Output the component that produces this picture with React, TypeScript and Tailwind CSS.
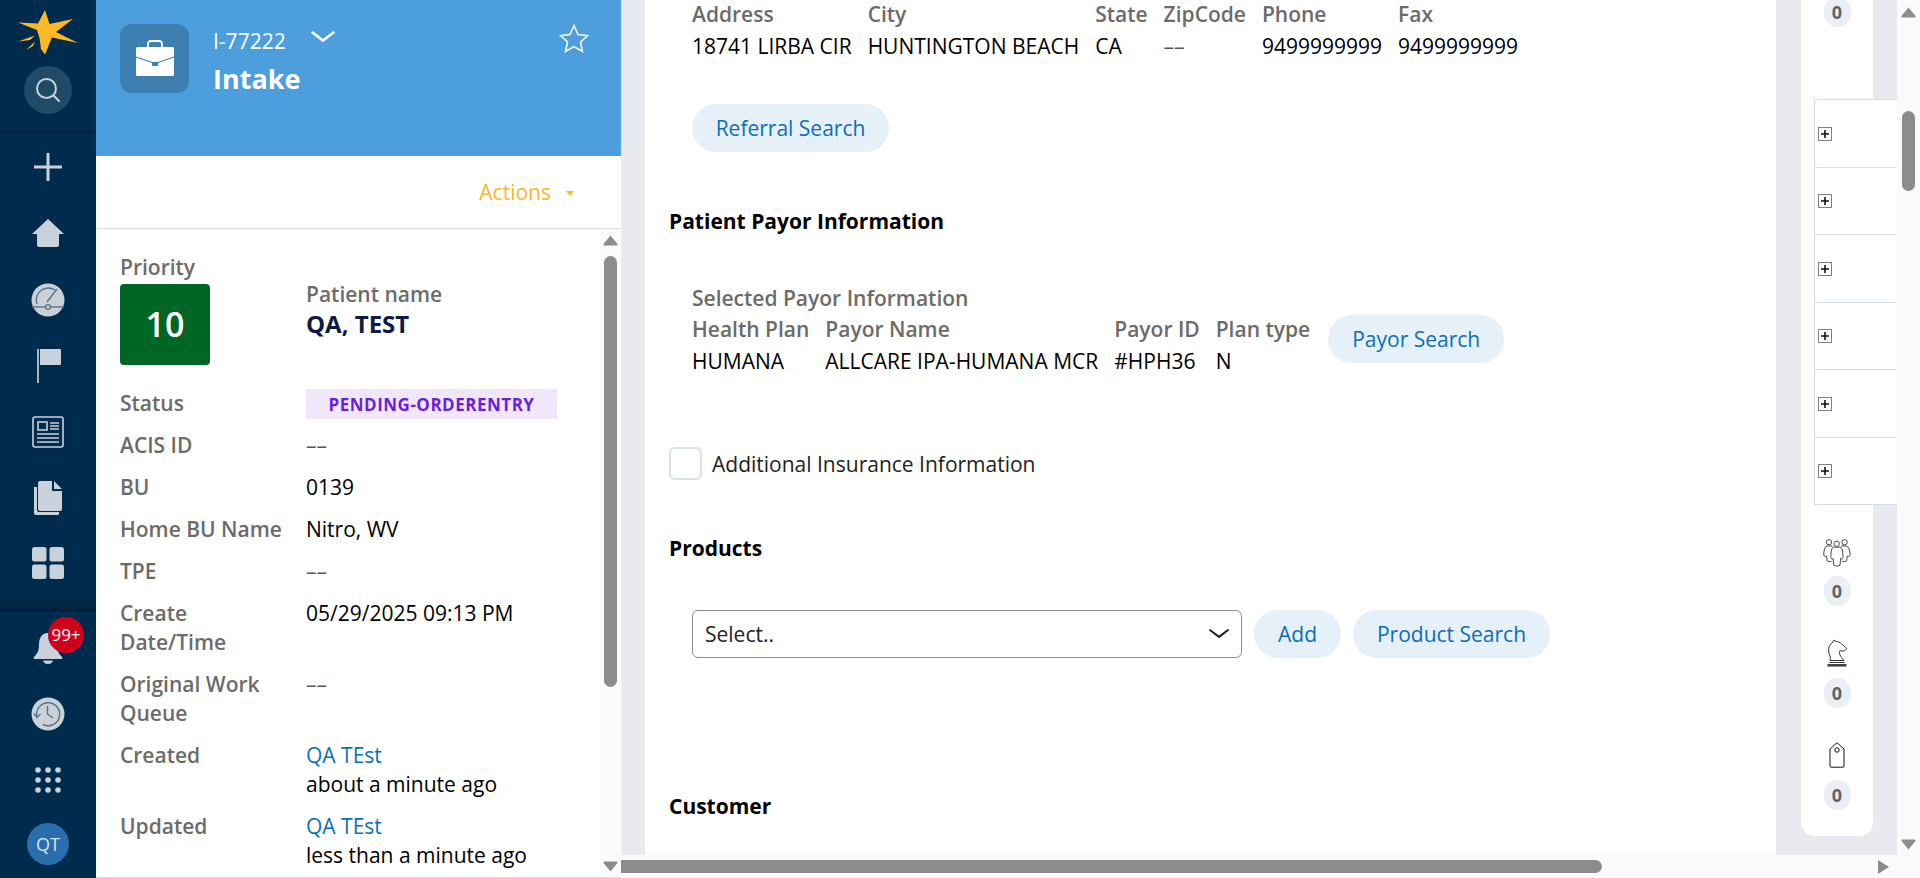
import React from 'react'

const NAVY = '#c9d1da'

const Logo = () => (
  <svg width="64" height="50" viewBox="16 9 64 50">
    <path
      d="M45 11 L49.5 25 L73 20 L56 33 L78 44 L52 38.5 L45 55.5 L41 50 L39.5 39 L37 31 L18 23.5 L38 24.5 Z"
      fill="#fdb827"
    />
    <path d="M18 42.5 L35 36.5 L30 41 Z M26 51 L35 42.5 L33 47 Z" fill="#fdb827" />
  </svg>
)

const SearchIcon = () => (
  <svg width="26" height="26" viewBox="0 0 26 26" fill="none" stroke={NAVY} strokeWidth="2">
    <circle cx="11.5" cy="11.5" r="9.5" />
    <path d="M18.5 18.5 L24 24" strokeLinecap="round" />
  </svg>
)

const PlusIcon = () => (
  <svg width="30" height="30" viewBox="0 0 30 30" stroke={NAVY} strokeWidth="3">
    <path d="M15 1 V29 M1 15 H29" />
  </svg>
)

const HomeIcon = () => (
  <svg width="34" height="30" viewBox="0 0 34 30" fill={NAVY}>
    <path d="M17 1 L33 16 L28 16 L28 27 Q28 29 26 29 L8 29 Q6 29 6 27 L6 16 L1 16 Z" />
  </svg>
)

const GaugeIcon = () => (
  <svg width="34" height="34" viewBox="0 0 34 34">
    <circle cx="17" cy="17" r="16.5" fill={NAVY} />
    <path d="M6 21 A12 12 0 0 1 24 7" fill="none" stroke="#5d6f82" strokeWidth="1.4" />
    <path d="M16 19 L26 6" stroke="#5d6f82" strokeWidth="1.4" />
    <path d="M1 24 H33" stroke="#5d6f82" strokeWidth="1.4" />
    <circle cx="17" cy="24" r="2.4" fill={NAVY} stroke="#5d6f82" strokeWidth="1.2" />
  </svg>
)

const FlagIcon = () => (
  <svg width="26" height="34" viewBox="0 0 26 34">
    <rect x="1" y="0" width="2" height="34" fill="#a8b4c0" />
    <path d="M4 0 H24 Q25 0 25 1 V15 Q25 16 24 16 H4 Z" fill={NAVY} />
  </svg>
)

const NewsIcon = () => (
  <svg width="32" height="32" viewBox="0 0 32 32" fill="none" stroke={NAVY}>
    <rect x="1" y="1" width="30" height="30" rx="2" strokeWidth="1.6" />
    <rect x="6" y="6" width="9" height="8" strokeWidth="1.6" />
    <path d="M18 7 H27 M18 10 H27 M18 13 H27 M5 18 H27 M5 22 H27 M5 26 H27" strokeWidth="1.6" />
  </svg>
)

const DocsIcon = () => (
  <svg width="30" height="34" viewBox="0 0 30 34" fill={NAVY}>
    <path d="M1 6 H4 V29 Q4 31 6 31 H26 V33 Q26 34 25 34 H3 Q1 34 1 32 Z" />
    <path d="M5 2 Q5 0 7 0 H19 V10 H29 V28 Q29 30 27 30 H7 Q5 30 5 28 Z" />
    <path d="M21 0 L29 8 H21 Z" />
  </svg>
)

const GridIcon = () => (
  <svg width="32" height="32" viewBox="0 0 32 32" fill={NAVY}>
    <rect x="0" y="0" width="14.5" height="14.5" rx="2.5" />
    <rect x="17.5" y="0" width="14.5" height="14.5" rx="2.5" />
    <rect x="0" y="17.5" width="14.5" height="14.5" rx="2.5" />
    <rect x="17.5" y="17.5" width="14.5" height="14.5" rx="2.5" />
  </svg>
)

const BellIcon = () => (
  <svg width="30" height="32" viewBox="0 0 30 32" fill={NAVY}>
    <path d="M15 1 C8 1 6 7 6 13 C6 19 4 22 1 25 Q0 27 2 27 H28 Q30 27 29 25 C26 22 24 19 24 13 C24 7 22 1 15 1 Z" />
    <path d="M10 28.5 H20 Q19 32 15 32 Q11 32 10 28.5 Z" />
  </svg>
)

const HistoryIcon = () => (
  <svg width="34" height="34" viewBox="0 0 34 34" fill="none">
    <circle cx="17" cy="17" r="16.5" fill={NAVY} />
    <path d="M6 20 A11.5 11.5 0 1 1 12 27.5" stroke="#5d6f82" strokeWidth="1.4" />
    <path d="M3 16.5 L6 20.5 L9.5 17" stroke="#5d6f82" strokeWidth="1.4" />
    <path d="M16.5 9 V17 L22 21" stroke="#5d6f82" strokeWidth="1.4" />
  </svg>
)

const DotsIcon = () => (
  <svg width="26" height="26" viewBox="0 0 26 26" fill={NAVY}>
    {[3, 13, 23].map(y =>
      [3, 13, 23].map(x => <circle key={`${x}-${y}`} cx={x} cy={y} r="2.8" />)
    )}
  </svg>
)

const Briefcase = () => (
  <svg width="40" height="37" viewBox="0 0 40 37">
    <path d="M13 8 V4 Q13 1 16 1 H24 Q27 1 27 4 V8" fill="none" stroke="#fff" strokeWidth="1.8" />
    <rect x="1" y="7" width="38" height="29" rx="1.5" fill="#fff" />
    <path d="M1 17 L17 22.5 H23 L39 17" fill="none" stroke="#3e7fb1" strokeWidth="1.2" />
    <path d="M17 22.5 H23 V25 Q23 26 22 26 H18 Q17 26 17 25 Z" fill="#3e7fb1" />
  </svg>
)

const StarOutline = () => (
  <svg width="30" height="29" viewBox="0 0 30 29" fill="none" stroke="#fff" strokeWidth="1.5">
    <path d="M15 1.5 L19 10.5 L28.5 11.5 L21.5 18 L23.5 27.5 L15 22.5 L6.5 27.5 L8.5 18 L1.5 11.5 L11 10.5 Z" />
  </svg>
)

const Chevron = ({ className = '' }: { className?: string }) => (
  <svg width="24" height="12" viewBox="0 0 24 12" fill="none" className={className}>
    <path d="M1.5 1.5 L12 9.5 L22.5 1.5" stroke="currentColor" strokeWidth="2.6" strokeLinecap="round" />
  </svg>
)

const PeopleIcon = () => (
  <svg width="28" height="28" viewBox="0 0 28 28" fill="none" stroke="#4a4a4a" strokeWidth="1">
    <circle cx="6" cy="3.2" r="2.7" />
    <circle cx="13.7" cy="4.8" r="2.7" />
    <circle cx="21.6" cy="3.2" r="2.7" />
    <path d="M9.5 7 H4.5 Q1.7 7.5 1.2 11 L0.7 15 Q0.7 17.5 2.6 17.5 L3.6 17 L4.2 22 Q6 23 8.5 22.5" />
    <path d="M18 7 H23 Q26 7.5 26.5 11 L27.2 15 Q27.2 17.5 25.2 17.5 L24.2 17 L23.6 22 Q21.6 23 19.3 22.5" />
    <path d="M10.7 8.2 H16.8 Q19.3 8.7 19.6 12 L20 18.5 Q19.8 20 18.2 20 L17.6 19.5 L17 26.3 Q14 28 10.8 26.3 L10.2 19.5 L9.5 20 Q7.8 20 7.8 18.5 L8.2 12 Q8.6 8.7 10.7 8.2 Z" />
  </svg>
)

const KnightIcon = () => (
  <svg width="20" height="28" viewBox="0 0 20 28" fill="none" stroke="#333" strokeWidth="1">
    <path d="M3 21.5 C4.5 18 2 16 1.6 12 C1.3 8 3 5 6 3 L7 1 L9 2.5 C13 2.5 16 6 19.5 9.5 C19 11.5 16 13 13 11.5 C11 14 14 18 17 21.5 Z" />
    <path d="M2.5 23.5 H17.5" />
    <rect x="0.5" y="25" width="19" height="2.6" fill="#444" stroke="none" />
  </svg>
)

const TagIcon = () => (
  <svg width="16" height="26" viewBox="0 0 16 26" fill="none" stroke="#111" strokeWidth="1">
    <path d="M8 0.7 L15 7 V24 Q15 25.2 14 25.2 H2 Q1 25.2 1 24 V7 Z" />
    <circle cx="8" cy="8" r="2.2" />
  </svg>
)

const TreePlus = () => (
  <span className="flex h-[14px] w-[14px] items-center justify-center border border-[#808080] bg-white">
    <svg width="8" height="8" viewBox="0 0 8 8" stroke="#111" strokeWidth="1.6">
      <path d="M4 0 V8 M0 4 H8" />
    </svg>
  </span>
)

const Badge = ({ className = '' }: { className?: string }) => (
  <span className={`flex h-[30px] w-[27px] items-center justify-center rounded-full bg-[#e9eff4] text-[18px] font-bold text-[#5f6368] ${className}`}>
    0
  </span>
)

const Pill = ({ children, className = '' }: { children: React.ReactNode; className?: string }) => (
  <button className={`flex h-[48px] items-center justify-center rounded-full bg-[#e6f0f8] text-[#0b6fb8] ${className}`}>
    {children}
  </button>
)

const Sidebar = () => (
  <aside className="flex h-full w-[96px] shrink-0 flex-col items-center bg-[#002b4d]">
    <div className="flex h-[133px] w-full shrink-0 flex-col items-center border-b border-[#001e36] pt-[8px]">
      <Logo />
      <div className="mt-[8px] flex h-[48px] w-[48px] items-center justify-center rounded-full bg-[#214a68]">
        <SearchIcon />
      </div>
    </div>
    <div className="flex h-[479px] w-full shrink-0 flex-col items-center bg-gradient-to-b from-[#002b4d] from-[96%] to-[#00223d] pt-[19px]">
      <PlusIcon />
      <div className="mt-[36px]"><HomeIcon /></div>
      <div className="mt-[35px]"><GaugeIcon /></div>
      <div className="mt-[32px] pl-[2px]"><FlagIcon /></div>
      <div className="mt-[33px]"><NewsIcon /></div>
      <div className="mt-[33px]"><DocsIcon /></div>
      <div className="mt-[32px]"><GridIcon /></div>
    </div>
    <div className="flex w-full flex-col items-center pt-[20px]">
      <div className="relative h-[32px]">
        <BellIcon />
        <span className="absolute left-[15px] top-[-15px] flex h-[36px] w-[36px] items-center justify-center rounded-full bg-[#d0021b] text-[17px] text-white">
          99+
        </span>
      </div>
      <div className="mt-[33px]"><HistoryIcon /></div>
      <div className="mt-[36px]"><DotsIcon /></div>
      <div className="mt-[30px] flex h-[42px] w-[42px] items-center justify-center rounded-full bg-[#2a6ead] text-[18px] text-[#d6e4f0]">
        QT
      </div>
    </div>
  </aside>
)

const LABEL = 'font-semibold text-[#6b6b6b]'

const rows: { label: React.ReactNode; value: React.ReactNode }[] = [
  { label: 'ACIS ID', value: <span className="text-[#555]">––</span> },
  { label: 'BU', value: '0139' },
  { label: 'Home BU Name', value: 'Nitro, WV' },
  { label: 'TPE', value: <span className="text-[#555]">––</span> },
  { label: <>Create<br />Date/Time</>, value: '05/29/2025 09:13 PM' },
  { label: <>Original Work<br />Queue</>, value: <span className="text-[#555]">––</span> },
  { label: 'Created', value: <><span className="text-[#0b6fb8]">QA TEst</span><br />about a minute ago</> },
  { label: 'Updated', value: <><span className="text-[#0b6fb8]">QA TEst</span><br />less than a minute ago</> },
]

const ArrowUp = () => (
  <svg width="15" height="11" viewBox="0 0 15 11" fill="#8c8c8c">
    <path d="M7.5 0.5 L14.5 9 Q15 10.5 13.5 10.5 H1.5 Q0 10.5 0.5 9 Z" />
  </svg>
)

const ArrowDown = () => (
  <svg width="15" height="11" viewBox="0 0 15 11" fill="#8c8c8c">
    <path d="M7.5 10.5 L14.5 2 Q15 0.5 13.5 0.5 H1.5 Q0 0.5 0.5 2 Z" />
  </svg>
)

const LeftPanel = () => (
  <section className="flex h-full w-[525px] shrink-0 flex-col bg-white">
    <header className="flex h-[156px] shrink-0 items-start bg-[#4c9fdc] pl-[24px] pt-[24px] text-white">
      <div className="flex h-[69px] w-[69px] items-center justify-center rounded-[12px] bg-[#3e7fb1]">
        <Briefcase />
      </div>
      <div className="ml-[24px] mt-[3px]">
        <div className="flex items-center">
          <span className="text-[21px] leading-[28px]">I-77222</span>
          <Chevron className="ml-[25px] mt-[-8px]" />
        </div>
        <div className="mt-[6px] text-[27px] font-bold leading-[36px]">Intake</div>
      </div>
      <div className="ml-auto mr-[32px]"><StarOutline /></div>
    </header>
    <div className="flex h-[73px] shrink-0 items-center justify-end border-b border-[#d6dce8] pr-[47px] pt-[2px] text-[21px] text-[#fdb52d]">
      Actions
      <span className="ml-[15px] mt-[1px] h-0 w-0 border-x-[4.5px] border-t-[5px] border-x-transparent border-t-[#fdb52d]" />
    </div>
    <div className="flex min-h-0 flex-1 border-b border-[#d6dce8]">
      <div className="min-w-0 flex-1 pl-[24px] pt-[24px] text-[21px] leading-[29px]">
        <div className="flex">
          <div className="w-[186px] shrink-0">
            <div className={LABEL}>Priority</div>
            <div className="mt-[2px] flex h-[81px] w-[90px] items-center justify-center rounded-[4px] bg-[#006625] text-[34px] font-semibold text-white">
              10
            </div>
          </div>
          <div className="pt-[27px]">
            <div className={LABEL}>Patient name</div>
            <div className="text-[24px] font-bold text-[#0b1b45]">QA, TEST</div>
          </div>
        </div>
        <div className="mt-[24px] flex items-center">
          <div className={`mt-[-2px] w-[186px] shrink-0 ${LABEL}`}>Status</div>
          <div className="flex h-[30px] w-[251px] items-center justify-center bg-[#f0e7fa] text-[17px] font-bold tracking-[0.5px] text-[#6d1fd8]">
            PENDING-ORDERENTRY
          </div>
        </div>
        <div className="mt-[12px] flex flex-col gap-y-[13px]">
          {rows.map((row, i) => (
            <div key={i} className="flex text-black">
              <div className={`w-[186px] shrink-0 ${LABEL}`}>{row.label}</div>
              <div>{row.value}</div>
            </div>
          ))}
        </div>
      </div>
      <div className="flex w-[21px] shrink-0 flex-col items-center bg-[#fafafa] pt-[6px]">
        <ArrowUp />
        <div className="mt-[10px] h-[431px] w-[13px] rounded-full bg-[#8c8c8c]" />
        <div className="mb-[5px] mt-auto"><ArrowDown /></div>
      </div>
    </div>
  </section>
)

const addressCols = [
  ['Address', '18741 LIRBA CIR'],
  ['City', 'HUNTINGTON BEACH'],
  ['State', 'CA'],
  ['ZipCode', '––'],
  ['Phone', '9499999999'],
  ['Fax', '9499999999'],
]

const payorCols = [
  ['Health Plan', 'HUMANA'],
  ['Payor Name', 'ALLCARE IPA-HUMANA MCR'],
  ['Payor ID', '#HPH36'],
  ['Plan type', 'N'],
]

const InfoCols = ({ cols }: { cols: string[][] }) => (
  <div className="flex gap-x-4">
    {cols.map(([label, value]) => (
      <div key={label} className="flex flex-col gap-y-[3px] whitespace-nowrap">
        <span className={LABEL}>{label}</span>
        <span className={value === '––' ? 'text-[#555]' : 'text-black'}>{value}</span>
      </div>
    ))}
  </div>
)

const Content = () => (
  <div className="h-full min-w-0 flex-1 overflow-hidden bg-white pl-[24px] text-[21px] leading-[29px]">
    <div className="ml-[23px]">
      <InfoCols cols={addressCols} />
      <Pill className="mt-[43px] w-[197px]">Referral Search</Pill>
    </div>
    <h2 className="mt-[55px] font-bold text-black">Patient Payor Information</h2>
    <div className="ml-[23px] mt-[48px]">
      <div className={LABEL}>Selected Payor Information</div>
      <div className="mt-[2px] flex items-start gap-x-[18px]">
        <InfoCols cols={payorCols} />
        <Pill className="w-[176px]">Payor Search</Pill>
      </div>
    </div>
    <label className="mt-[71px] flex items-center">
      <span className="h-[33px] w-[33px] rounded-[6px] border-2 border-[#d6e0ef] bg-white" />
      <span className="ml-[10px] mt-[1px] text-[#222]">Additional Insurance Information</span>
    </label>
    <h2 className="mt-[54px] font-bold text-black">Products</h2>
    <div className="ml-[23px] mt-[47px] flex items-center gap-x-3">
      <div className="flex h-[48px] w-[550px] items-center justify-between rounded-[6px] border border-[#8c8c8c] px-[12px] text-[#222]">
        Select..
        <Chevron className="h-[10px] w-[20px] text-[#222]" />
      </div>
      <Pill className="w-[87px]">Add</Pill>
      <Pill className="w-[197px]">Product Search</Pill>
    </div>
    <h2 className="mt-[134px] font-bold text-black">Customer</h2>
  </div>
)

const Rail = () => (
  <div className="relative flex h-full w-[96px] shrink-0 flex-col pb-[19px]">
    <div className="flex w-[72px] flex-1 flex-col items-center rounded-b-[14px] bg-white">
      <Badge className="mt-[-3px]" />
      <div className="mt-[512px]"><PeopleIcon /></div>
      <Badge className="mt-[9px]" />
      <div className="mt-[33px]"><KnightIcon /></div>
      <Badge className="mt-[11px]" />
      <div className="mt-[34px]"><TagIcon /></div>
      <Badge className="mt-[12px]" />
    </div>
    <div className="absolute left-[13px] right-0 top-[99px] flex h-[406px] flex-col divide-y divide-[#d6dce8] border-y border-l border-[#d6dce8] bg-white">
      {[0, 1, 2, 3, 4, 5].map(i => (
        <div key={i} className="flex flex-1 items-center pl-[3px] pt-[1px]">
          <TreePlus />
        </div>
      ))}
    </div>
  </div>
)

export default function App() {
  return (
    <div className="flex h-[878px] w-[1920px] overflow-hidden bg-white font-['Open_Sans',sans-serif]">
      <Sidebar />
      <LeftPanel />
      <main className="flex h-full min-w-0 flex-1 flex-col">
        <div className="flex h-[855px] bg-[#e8eaf0] pl-[24px]">
          <Content />
          <div className="w-[25px] shrink-0" />
          <Rail />
          <div className="flex h-full w-[23px] shrink-0 flex-col items-center bg-[#fafafa] pt-[7px]">
            <ArrowUp />
            <div className="mt-[93px] h-[80px] w-[13px] rounded-full bg-[#8c8c8c]" />
            <div className="mb-[5px] mt-auto"><ArrowDown /></div>
          </div>
        </div>
        <div className="flex h-[23px] items-center bg-[#fafafa]">
          <div className="h-[13px] w-[981px] rounded-r-full bg-[#8c8c8c]" />
          <span className="ml-[276px] h-0 w-0 border-y-[7px] border-l-[11px] border-y-transparent border-l-[#8c8c8c]" />
        </div>
      </main>
    </div>
  )
}
